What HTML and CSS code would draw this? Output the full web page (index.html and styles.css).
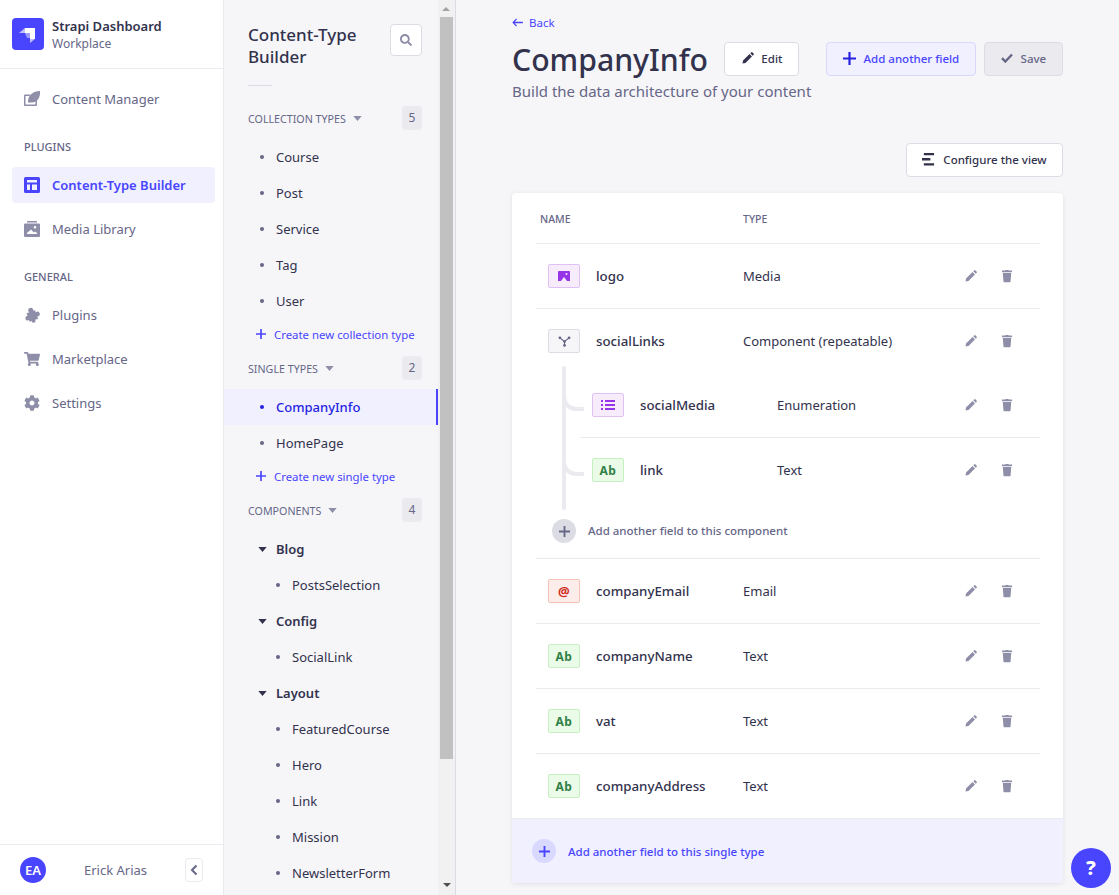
FILE: index.html
```html
<!DOCTYPE html>
<html lang="en">
<head>
    <meta charset="UTF-8">
    <title>Strapi Dashboard</title>
    <link rel="stylesheet" href="styles.css">
</head>
<body>
    <!-- Shared icons -->
    <svg class="sprite" xmlns="http://www.w3.org/2000/svg">
        <symbol id="i-pencil" viewBox="-1.500 -1.500 19 19"><path d="M1.500 14.500 2.100 11 9.800 3.300 12.700 6.200 5 13.900zM10.700 2.400l1-1a1.200 1.200 0 0 1 1.700 0l1.200 1.200a1.200 1.200 0 0 1 0 1.700l-1 1z"/></symbol>
        <symbol id="i-trash" viewBox="-1.500 -1.500 19 19"><path d="M5.800 1.600 6.400 1h3.200l.6.6H14V3.400H2V1.600zM3 4.400h10l-.8 10.200a.9.9 0 0 1-.9.9H4.700a.9.9 0 0 1-.9-.9z"/></symbol>
        <symbol id="i-plus" viewBox="0 0 12 12"><path d="M5 0h2v5h5v2H7v5H5V7H0V5h5z"/></symbol>
        <symbol id="i-caret" viewBox="0 0 10 6"><path d="M0 0h10L5 6z"/></symbol>
    </svg>

    <div class="app">
        <!-- Left navigation -->
        <aside class="sidebar">
            <div class="brand">
                <svg class="brand-logo" viewBox="0 0 32 32">
                    <rect width="32" height="32" rx="4" fill="#4945ff"/>
                    <path d="M13 10H23V21H18V15H13z" fill="#fff"/>
                    <path d="M13 10V15H7z" fill="#fff" opacity=".65"/>
                    <path d="M18 21H23L18 25z" fill="#fff" opacity=".65"/>
                    <path d="M13 15H18V20H15z" fill="#fff" opacity=".45"/>
                </svg>
                <div>
                    <div class="brand-name">Strapi Dashboard</div>
                    <div class="brand-sub">Workplace</div>
                </div>
            </div>

            <nav class="nav">
                <a class="nav-item">
                    <svg class="nav-icon" viewBox="0 0 16 16"><path d="M0 3.500h6.500L5.500 5H1.500v8.500h10V10L13 8.500V14a1 1 0 0 1-1 1H1a1 1 0 0 1-1-1V4.500a1 1 0 0 1 1-1z"/><path d="M16 0c.4 6.500-2.500 11.500-8 11.500H4C3.500 5 8.500 0 16 0z"/></svg>
                    Content Manager
                </a>
                <div class="nav-label nav-label-plugins">Plugins</div>
                <a class="nav-item active">
                    <svg class="nav-icon" viewBox="0 0 16 16"><path fill-rule="evenodd" d="M1.500 0h13A1.500 1.500 0 0 1 16 1.500v13a1.500 1.500 0 0 1-1.500 1.500h-13A1.500 1.500 0 0 1 0 14.500v-13A1.500 1.500 0 0 1 1.500 0zM3 3v2.500h10V3zm0 4.500V13h3V7.500zm5 0V13h5V7.500z"/></svg>
                    Content-Type Builder
                </a>
                <a class="nav-item">
                    <svg class="nav-icon" viewBox="0 0 16 16"><path d="M3 0h10v1.500H3z"/><path fill-rule="evenodd" d="M1 2.500h14a1 1 0 0 1 1 1V15a1 1 0 0 1-1 1H1a1 1 0 0 1-1-1V3.500a1 1 0 0 1 1-1zm10 2.500a1.300 1.300 0 1 0 0 2.600A1.300 1.300 0 0 0 11 5zM3 13h10v-1l-2-1.500-1.200 1L7 8.500 3 12z"/></svg>
                    Media Library
                </a>
                <div class="nav-label nav-label-general">General</div>
                <a class="nav-item">
                    <svg class="nav-icon" viewBox="0 0 16 16"><g transform="rotate(-20 8 8)"><path d="M3.500 4.500h9v9h-9z"/><circle cx="8.500" cy="3.200" r="2.600"/><circle cx="13.400" cy="9" r="2.400"/><circle cx="2.800" cy="9.500" r="2.300"/><circle cx="7.500" cy="14" r="1.900"/></g></svg>
                    Plugins
                </a>
                <a class="nav-item">
                    <svg class="nav-icon" viewBox="0 0 576 512"><path d="M528.120 301.319l47.273-208C578.806 78.301 567.391 64 551.990 64H159.208l-9.166-44.810C147.758 8.021 137.930 0 126.529 0H24C10.745 0 0 10.745 0 24v16c0 13.255 10.745 24 24 24h69.883l70.248 343.435C147.325 417.100 136 435.222 136 456c0 30.928 25.072 56 56 56s56-25.072 56-56c0-15.674-6.447-29.835-16.824-40h209.647C430.447 426.165 424 440.326 424 456c0 30.928 25.072 56 56 56s56-25.072 56-56c0-22.172-12.888-41.332-31.579-50.405l5.517-24.276c3.413-15.018-8.002-29.319-23.403-29.319H218.117l-6.545-32h293.145c11.206 0 20.920-7.754 23.403-18.681z"/></svg>
                    Marketplace
                </a>
                <a class="nav-item">
                    <svg class="nav-icon" viewBox="0 0 512 512"><path d="M487.400 315.700l-42.600-24.600c4.300-23.200 4.300-47 0-70.200l42.600-24.600c4.900-2.800 7.100-8.600 5.500-14-11.100-35.600-30-67.800-54.700-94.600-3.800-4.100-10-5.100-14.800-2.300L380.800 110c-17.900-15.400-38.500-27.300-60.800-35.100V25.800c0-5.600-3.900-10.500-9.400-11.700-36.700-8.200-74.300-7.800-109.200 0-5.500 1.200-9.400 6.100-9.400 11.700V75c-22.200 7.900-42.800 19.800-60.800 35.100L88.700 85.500c-4.900-2.800-11-1.900-14.800 2.300-24.700 26.700-43.600 58.900-54.700 94.600-1.700 5.400.6 11.200 5.500 14L67.300 221c-4.300 23.200-4.300 47 0 70.200l-42.600 24.600c-4.900 2.800-7.100 8.600-5.500 14 11.100 35.600 30 67.800 54.700 94.600 3.800 4.100 10 5.100 14.800 2.300l42.600-24.600c17.900 15.400 38.500 27.300 60.800 35.100v49.200c0 5.600 3.900 10.500 9.400 11.700 36.700 8.200 74.300 7.800 109.200 0 5.500-1.200 9.400-6.100 9.400-11.700v-49.200c22.200-7.900 42.800-19.800 60.800-35.100l42.600 24.600c4.900 2.800 11 1.900 14.800-2.300 24.700-26.700 43.600-58.900 54.700-94.600 1.500-5.500-.7-11.300-5.600-14.100zM256 336c-44.100 0-80-35.900-80-80s35.900-80 80-80 80 35.900 80 80-35.900 80-80 80z"/></svg>
                    Settings
                </a>
            </nav>

            <div class="user-bar">
                <span class="avatar">EA</span>
                <span class="user-name">Erick Arias</span>
                <button class="collapse-btn">
                    <svg viewBox="0 0 8 12" width="8" height="12"><path d="M6.500 1.500 2 6l4.500 4.500" fill="none" stroke="#666687" stroke-width="2"/></svg>
                </button>
            </div>
        </aside>

        <!-- Content types list -->
        <section class="types-panel">
            <div class="types-list">
                <div class="types-head">
                    <h2>Content-Type Builder</h2>
                    <button class="search-btn">
                        <svg viewBox="0 0 512 512" width="12" height="12"><path d="M505 442.700L405.300 343c-4.500-4.500-10.600-7-17-7H372c27.600-35.300 44-79.700 44-128C416 93.100 322.900 0 208 0S0 93.100 0 208s93.100 208 208 208c48.300 0 92.700-16.400 128-44v16.300c0 6.400 2.500 12.500 7 17l99.700 99.700c9.400 9.400 24.600 9.400 33.900 0l28.300-28.300c9.400-9.400 9.400-24.600.1-34zM208 336c-70.700 0-128-57.200-128-128 0-70.700 57.200-128 128-128 70.700 0 128 57.200 128 128 0 70.700-57.200 128-128 128z"/></svg>
                    </button>
                </div>
                <div class="types-rule"></div>

                <div class="group-head">
                    <span>Collection Types</span>
                    <svg class="caret"><use href="#i-caret"/></svg>
                    <b class="count">5</b>
                </div>
                <ul class="type-list">
                    <li>Course</li>
                    <li>Post</li>
                    <li>Service</li>
                    <li>Tag</li>
                    <li>User</li>
                </ul>
                <a class="create-link"><svg><use href="#i-plus"/></svg>Create new collection type</a>

                <div class="group-head">
                    <span>Single Types</span>
                    <svg class="caret"><use href="#i-caret"/></svg>
                    <b class="count">2</b>
                </div>
                <ul class="type-list">
                    <li class="current">CompanyInfo</li>
                    <li>HomePage</li>
                </ul>
                <a class="create-link"><svg><use href="#i-plus"/></svg>Create new single type</a>

                <div class="group-head">
                    <span>Components</span>
                    <svg class="caret"><use href="#i-caret"/></svg>
                    <b class="count">4</b>
                </div>
                <div class="cat"><svg class="caret"><use href="#i-caret"/></svg>Blog</div>
                <ul class="type-list sub">
                    <li>PostsSelection</li>
                </ul>
                <div class="cat"><svg class="caret"><use href="#i-caret"/></svg>Config</div>
                <ul class="type-list sub">
                    <li>SocialLink</li>
                </ul>
                <div class="cat"><svg class="caret"><use href="#i-caret"/></svg>Layout</div>
                <ul class="type-list sub">
                    <li>FeaturedCourse</li>
                    <li>Hero</li>
                    <li>Link</li>
                    <li>Mission</li>
                    <li>NewsletterForm</li>
                </ul>
            </div>
            <div class="scrollbar">
                <span class="arrow-up"></span>
                <span class="thumb"></span>
                <span class="arrow-down"></span>
            </div>
        </section>

        <!-- Main content -->
        <main class="main">
            <a class="back"><svg viewBox="0 0 12 10" width="11" height="9"><path d="M5 1 1.200 5 5 9M1.500 5H12" fill="none" stroke="#4945ff" stroke-width="1.400"/></svg>Back</a>

            <div class="page-head">
                <h1>CompanyInfo</h1>
                <button class="btn btn-edit"><svg class="btn-icon"><use href="#i-pencil"/></svg>Edit</button>
                <button class="btn btn-add"><svg class="btn-icon"><use href="#i-plus"/></svg>Add another field</button>
                <button class="btn btn-save">
                    <svg class="btn-icon" viewBox="0 0 12 10"><path d="M1 5.200 4.300 8.500 11 1.500" fill="none" stroke="#666687" stroke-width="2.400"/></svg>
                    Save
                </button>
            </div>
            <p class="page-sub">Build the data architecture of your content</p>

            <div class="view-bar">
                <button class="btn btn-config">
                    <svg class="btn-icon" viewBox="0 0 14 14"><path d="M2 0h11v2.500H2zM0 5.500h9V8H0zM2 11h11v2.500H2z" fill="#32324d"/></svg>
                    Configure the view
                </button>
            </div>

            <div class="card">
                <div class="card-body">
                    <div class="table-head"><span class="th-name">Name</span><span>Type</span></div>

                    <div class="row">
                        <span class="badge badge-purple"><svg viewBox="0 0 12 10" width="12" height="10"><path fill-rule="evenodd" d="M1 0h10a1 1 0 0 1 1 1v9H9L6 6 3 10H0V1a1 1 0 0 1 1-1zm7.500 2a1 1 0 1 0 0 2 1 1 0 0 0 0-2z"/></svg></span>
                        <span class="field-name">logo</span>
                        <span class="field-type">Media</span>
                        <span class="actions"><svg><use href="#i-pencil"/></svg><svg><use href="#i-trash"/></svg></span>
                    </div>

                    <div class="row">
                        <span class="badge badge-grey"><svg viewBox="0 0 14 12" width="13" height="11"><path d="M2 2 7 6 12 2M7 6V10.500" fill="none" stroke="#666687" stroke-width="1.200"/><circle cx="2" cy="2" r="1.500" fill="#666687"/><circle cx="12" cy="2" r="1.500" fill="#666687"/><circle cx="7" cy="6" r="1.500" fill="#666687"/><circle cx="7" cy="10.300" r="1.500" fill="#666687"/></svg></span>
                        <span class="field-name">socialLinks</span>
                        <span class="field-type">Component (repeatable)</span>
                        <span class="actions"><svg><use href="#i-pencil"/></svg><svg><use href="#i-trash"/></svg></span>
                    </div>

                    <div class="nested">
                        <div class="row row-sub">
                            <span class="badge badge-purple"><svg viewBox="0 0 14 10" width="14" height="10"><path d="M0 0h2v2H0zM4 0h10v2H4zM0 4h2v2H0zM4 4h10v2H4zM0 8h2v2H0zM4 8h10v2H4z"/></svg></span>
                            <span class="field-name">socialMedia</span>
                            <span class="field-type">Enumeration</span>
                            <span class="actions"><svg><use href="#i-pencil"/></svg><svg><use href="#i-trash"/></svg></span>
                        </div>
                        <div class="row row-sub">
                            <span class="badge badge-green">Ab</span>
                            <span class="field-name">link</span>
                            <span class="field-type">Text</span>
                            <span class="actions"><svg><use href="#i-pencil"/></svg><svg><use href="#i-trash"/></svg></span>
                        </div>
                        <div class="add-sub"><span class="add-circle"><svg><use href="#i-plus"/></svg></span><span class="add-text">Add another field to this component</span></div>
                    </div>

                    <div class="row">
                        <span class="badge badge-red">@</span>
                        <span class="field-name">companyEmail</span>
                        <span class="field-type">Email</span>
                        <span class="actions"><svg><use href="#i-pencil"/></svg><svg><use href="#i-trash"/></svg></span>
                    </div>
                    <div class="row">
                        <span class="badge badge-green">Ab</span>
                        <span class="field-name">companyName</span>
                        <span class="field-type">Text</span>
                        <span class="actions"><svg><use href="#i-pencil"/></svg><svg><use href="#i-trash"/></svg></span>
                    </div>
                    <div class="row">
                        <span class="badge badge-green">Ab</span>
                        <span class="field-name">vat</span>
                        <span class="field-type">Text</span>
                        <span class="actions"><svg><use href="#i-pencil"/></svg><svg><use href="#i-trash"/></svg></span>
                    </div>
                    <div class="row">
                        <span class="badge badge-green">Ab</span>
                        <span class="field-name">companyAddress</span>
                        <span class="field-type">Text</span>
                        <span class="actions"><svg><use href="#i-pencil"/></svg><svg><use href="#i-trash"/></svg></span>
                    </div>
                </div>
                <div class="card-foot"><span class="add-circle"><svg><use href="#i-plus"/></svg></span>Add another field to this single type</div>
            </div>
        </main>
    </div>

    <button class="help-btn">?</button>
</body>
</html>
```

FILE: styles.css
```css
* {
    box-sizing: border-box;
}
html, body {
    height: 100%;
    margin: 0;
    overflow: hidden;
}
body {
    font-family: 'Noto Sans', 'Open Sans', sans-serif;
    font-size: 13px;
    color: #32324d;
    background-color: #f6f6f9;
}
button {
    font-family: inherit;
    cursor: pointer;
}
.sprite {
    display: none;
}
.app {
    display: flex;
    height: 895px;
}

/* Left navigation */
.sidebar {
    width: 224px;
    flex: none;
    display: flex;
    flex-direction: column;
    background: white;
    border-right: 1px solid #eaeaef;
}
.brand {
    display: flex;
    align-items: center;
    gap: 8px;
    height: 69px;
    padding: 0 12px;
    border-bottom: 1px solid #eaeaef;
}
.brand-logo {
    width: 32px;
    height: 32px;
}
.brand-name {
    font-weight: 600;
    line-height: 18px;
}
.brand-sub {
    padding-top: 1px;
    font-size: 12px;
    line-height: 16px;
    color: #666687;
}
.nav {
    flex: 1;
    padding: 12px 8px 0 12px;
}
.nav-item {
    display: flex;
    align-items: center;
    gap: 12px;
    height: 36px;
    margin-bottom: 8px;
    padding: 0 12px;
    border-radius: 4px;
    color: #666687;
    cursor: pointer;
}
.nav-icon {
    width: 16px;
    height: 16px;
    fill: #8e8ea9;
}
.nav-item.active {
    background: #f0f0ff;
    color: #4945ff;
    font-weight: 600;
}
.nav-item.active .nav-icon {
    fill: #4945ff;
}
.nav-label {
    padding-left: 12px;
    font-size: 11px;
    line-height: 16px;
    font-weight: 500;
    color: #666687;
    text-transform: uppercase;
}
.nav-label-plugins,
.nav-label-general {
    margin: 22px 0 12px;
}
.user-bar {
    display: flex;
    align-items: center;
    height: 51px;
    padding: 0 20px;
    border-top: 1px solid #eaeaef;
}
.avatar {
    width: 26px;
    height: 26px;
    border-radius: 50%;
    background: #4945ff;
    color: white;
    font-size: 13px;
    font-weight: 600;
    line-height: 26px;
    text-align: center;
}
.user-name {
    flex: 1;
    text-align: center;
    color: #666687;
}
.collapse-btn {
    display: flex;
    align-items: center;
    justify-content: center;
    width: 18px;
    height: 24px;
    padding: 0;
    background: white;
    border: 1px solid #eaeaef;
    border-radius: 4px;
}

/* Content types list */
.types-panel {
    display: flex;
    width: 232px;
    flex: none;
    height: 895px;
    overflow: hidden;
    background: #f6f6f9;
    border-right: 1px solid #dcdce4;
}
.types-list {
    width: 214px;
    flex: none;
}
.scrollbar {
    display: flex;
    flex-direction: column;
    align-items: center;
    width: 17px;
    flex: none;
    background: #f1f1f1;
}
.thumb {
    width: 13px;
    height: 742px;
    margin-top: 4px;
    background: #c1c1c1;
}
.arrow-up {
    height: 0;
    margin: 7px 0 2px -1px;
    border-left: 4px solid transparent;
    border-right: 4px solid transparent;
    border-bottom: 4px solid #a3a3a3;
}
.arrow-down {
    margin-top: 124px;
    border-left: 4px solid transparent;
    border-right: 4px solid transparent;
    border-top: 4px solid #505050;
}
.types-head {
    display: flex;
    align-items: flex-start;
    justify-content: space-between;
    padding: 24px 16px 0 24px;
}
.types-head h2 {
    width: 130px;
    margin: 0;
    font-size: 17px;
    font-weight: 500;
    line-height: 22px;
}
.search-btn {
    display: flex;
    align-items: center;
    justify-content: center;
    width: 32px;
    height: 32px;
    padding: 0;
    background: white;
    border: 1px solid #dcdce4;
    border-radius: 4px;
    fill: #8e8ea9;
}
.types-rule {
    width: 24px;
    height: 1px;
    margin: 17px 0 20px 24px;
    background: #dcdce4;
}
.group-head {
    display: flex;
    align-items: center;
    height: 24px;
    padding: 0 16px 0 24px;
    font-size: 10.700px;
    color: #666687;
    text-transform: uppercase;
}
.group-head span {
    padding-top: 1px;
}
.caret {
    width: 9px;
    height: 5px;
    margin-left: 7px;
    fill: #8e8ea9;
}
.count {
    margin-left: auto;
    width: 20px;
    height: 24px;
    background: #eaeaef;
    border-radius: 4px;
    font-weight: 400;
    font-size: 12px;
    line-height: 24px;
    text-align: center;
}
.type-list {
    list-style: none;
    margin: 9px 0 0;
    padding: 0;
}
.type-list li {
    position: relative;
    height: 36px;
    padding-left: 52px;
    line-height: 36px;
}
.type-list li::before {
    content: "";
    position: absolute;
    left: 36px;
    top: 16px;
    width: 4px;
    height: 4px;
    border-radius: 50%;
    background: #666687;
}
.type-list li.current {
    background: #f0f0ff;
    border-right: 2px solid #4945ff;
    color: #271fe0;
    font-weight: 500;
}
.type-list li.current::before {
    background: #271fe0;
}
.create-link {
    display: flex;
    align-items: center;
    gap: 8px;
    height: 24px;
    margin: 3px 0 10px;
    padding-left: 32px;
    font-size: 11.400px;
    color: #4945ff;
}
.create-link svg {
    width: 10px;
    height: 10px;
    fill: #4945ff;
}
.cat {
    display: flex;
    align-items: center;
    height: 36px;
    padding-left: 27px;
    font-weight: 600;
}
.group-head + .cat {
    margin-top: 9px;
}
.cat .caret {
    margin: 0 9px 0 7px;
    fill: #32324d;
}
.type-list.sub {
    margin: 0;
}
.type-list.sub li {
    padding-left: 68px;
}
.type-list.sub li::before {
    left: 52px;
}

/* Main content */
.main {
    flex: 1;
    min-width: 0;
    padding: 0 56px;
}
.back {
    display: flex;
    align-items: center;
    gap: 6px;
    height: 16px;
    margin-top: 14px;
    font-size: 11.500px;
    color: #4945ff;
}
.page-head {
    display: flex;
    align-items: flex-start;
    height: 34px;
    margin-top: 12px;
}
.page-head h1 {
    margin: 0 16px 0 0;
    padding-top: 1px;
    font-size: 30.200px;
    font-weight: 500;
    line-height: 34px;
}
.btn {
    display: flex;
    align-items: center;
    justify-content: center;
    height: 34px;
    padding: 0 0 2px;
    border: 1px solid #dcdce4;
    border-radius: 4px;
    background: white;
    font-size: 11.500px;
    font-weight: 500;
    color: #32324d;
}
.btn-icon {
    width: 13px;
    height: 13px;
    margin-right: 8px;
    fill: #32324d;
}
.btn-edit {
    width: 75px;
}
.btn-edit .btn-icon {
    width: 16px;
    height: 16px;
    margin-right: 5px;
}
.btn-add {
    width: 150px;
    margin-left: 27px;
    background: #f0f0ff;
    border-color: #d9d8ff;
    color: #4945ff;
}
.btn-add .btn-icon {
    fill: #271fe0;
    margin-right: 8px;
}
.btn-save {
    width: 79px;
    margin-left: 8px;
    background: #eaeaef;
    color: #666687;
}
.btn-save .btn-icon {
    width: 12px;
    height: 10px;
}
.page-sub {
    margin: 5px 0 0;
    font-size: 15px;
    line-height: 20px;
    color: #666687;
}
.view-bar {
    display: flex;
    justify-content: flex-end;
    margin-top: 42px;
}
.btn-config {
    width: 157px;
}
.card {
    margin-top: 16px;
    border-radius: 4px;
    background: white;
    box-shadow: 0 1px 4px rgba(33, 33, 52, 0.1);
    overflow: hidden;
}
.card-body {
    padding: 0 23px 0 24px;
}
.table-head {
    display: flex;
    align-items: center;
    height: 50px;
    padding: 2px 0 0 4px;
    font-size: 10.500px;
    font-weight: 500;
    color: #666687;
    text-transform: uppercase;
}
.th-name {
    width: 203px;
}
.row {
    display: flex;
    align-items: center;
    height: 65px;
    padding: 0 25px 0 12px;
    border-top: 1px solid #eaeaef;
}
.badge {
    display: flex;
    align-items: center;
    justify-content: center;
    flex: none;
    width: 32px;
    height: 24px;
    border: 1px solid;
    border-radius: 2px;
    font-size: 12px;
    font-weight: 700;
    letter-spacing: 0.5px;
}
.badge-purple {
    background: #f6ecfc;
    border-color: #e0c1f4;
    fill: #9736e8;
}
.badge-grey {
    background: #f6f6f9;
    border-color: #dcdce4;
}
.badge-green {
    background: #eafbe7;
    border-color: #c6f0c2;
    color: #328048;
}
.badge-red {
    background: #fcecea;
    border-color: #f5c0b8;
    color: #d02b20;
    font-size: 13px;
}
.field-name {
    width: 147px;
    flex: none;
    margin-left: 16px;
    font-size: 13.300px;
    font-weight: 500;
}
.field-type {
    flex: 1;
}
.actions {
    display: flex;
    gap: 20px;
    fill: #8e8ea9;
}
.actions svg {
    display: block;
    width: 16px;
    height: 16px;
}

/* Component sub fields */
.nested {
    position: relative;
    height: 185px;
    padding-left: 44px;
}
.nested::before {
    content: "";
    position: absolute;
    left: 26px;
    top: -7px;
    width: 4px;
    height: 144px;
    border-radius: 2px;
    background: #eaeaef;
}
.nested .row {
    position: relative;
    height: 64px;
    border-top: none;
}
.nested .row + .row {
    height: 65px;
    border-top: 1px solid #eaeaef;
}
.row-sub::before {
    content: "";
    position: absolute;
    left: -18px;
    top: 20px;
    width: 18px;
    height: 14px;
    border-left: 4px solid #eaeaef;
    border-bottom: 4px solid #eaeaef;
    border-bottom-left-radius: 14px;
}
.row-sub .field-name {
    width: 137px;
}
.add-sub {
    display: flex;
    align-items: center;
    gap: 12px;
    height: 24px;
    margin: 17px 0 0 -28px;
    font-size: 11.500px;
    font-weight: 500;
    color: #666687;
}
.add-text {
    padding-bottom: 2px;
}
.add-circle {
    display: flex;
    align-items: center;
    justify-content: center;
    width: 24px;
    height: 24px;
    border-radius: 50%;
    background: #dcdce4;
    fill: #666687;
}
.add-circle svg {
    width: 11px;
    height: 11px;
}
.card-foot {
    display: flex;
    align-items: center;
    gap: 12px;
    height: 65px;
    padding-left: 20px;
    background: #f0f0ff;
    border-top: 1px solid #eaeaef;
    font-size: 11.500px;
    font-weight: 500;
    color: #4945ff;
}
.card-foot .add-circle {
    background: #d9d8ff;
    fill: #4945ff;
}

/* Floating help */
.help-btn {
    position: fixed;
    right: 8px;
    bottom: 7px;
    width: 40px;
    height: 40px;
    padding: 0;
    border: none;
    border-radius: 50%;
    background: #4945ff;
    color: white;
    font-size: 20px;
    font-weight: 800;
    line-height: 40px;
}
```
